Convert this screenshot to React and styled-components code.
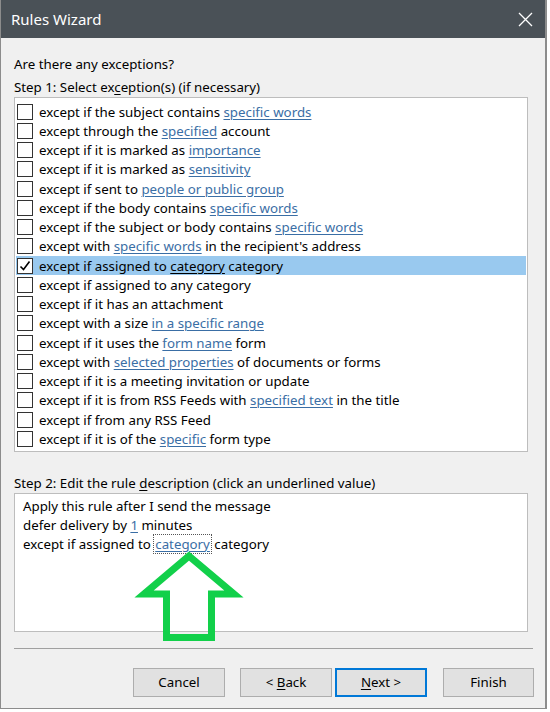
import React from "react";
import styled, {createGlobalStyle, css} from "styled-components";

const GlobalStyle = createGlobalStyle`
    html, body {
        margin: 0;
        padding: 0;
        background: #ffffff;
    }
    body {
        font-family: "Noto Sans", "Open Sans", sans-serif;
        font-size: 13.3px;
        color: #000000;
    }
`;

const Window = styled.div`
    position: relative;
    width: 547px;
    height: 709px;
    box-sizing: border-box;
    background: #f0f0f0;
    border-left: 1px solid #8c8c8c;
    border-right: 2px solid #8c8c8c;
    border-bottom: 1px solid #8c8c8c;
    display: flex;
    flex-direction: column;
`;

const TitleBar = styled.div`
    height: 38px;
    flex: none;
    background: #4a5157;
    color: #ffffff;
    display: flex;
    align-items: center;
    justify-content: space-between;
    padding: 0 12px 0 10px;
    font-size: 15px;
`;

const CloseIcon = styled.svg`
    width: 15px;
    height: 15px;
`;

const Body = styled.div`
    flex: 1;
    display: flex;
    flex-direction: column;
    padding: 16px 18px 0 13px;
`;

const Label = styled.div`
    line-height: 20px;
    height: 20px;
    margin-top: ${props => props.gap || 0}px;
`;

const Mnemonic = styled.span`
    text-decoration: underline;
    text-underline-offset: 2px;
`;

const ListBox = styled.div`
    background: #ffffff;
    border: 1px solid #bdbdbd;
    width: 514px;
    box-sizing: border-box;
    padding: 4px 1px 2px 1px;
`;

const Row = styled.div`
    height: 19.25px;
    display: flex;
    align-items: center;
    gap: 6px;
    padding-left: 1px;
    white-space: nowrap;

    ${props => props.selected && css`
        background: #99c9ef;
    `}
`;

const Check = styled.div`
    width: 14px;
    height: 14px;
    flex: none;
    border: 1px solid #333333;
    background: #ffffff;
    display: flex;
    align-items: center;
    justify-content: center;
`;

const Link = styled.span`
    color: #3a6ea5;
    text-decoration: underline;
    text-underline-offset: 2px;
    text-decoration-thickness: 1px;

    ${props => props.selected && css`
        color: #000000;
    `}
    ${props => props.focused && css`
        outline: 1px dotted #555555;
        outline-offset: 0px;
        padding: 0 1px;
    `}
`;

const DescBox = styled.div`
    position: relative;
    background: #ffffff;
    border: 1px solid #bdbdbd;
    width: 514px;
    height: 139px;
    box-sizing: border-box;
    padding: 3px 8px;
    line-height: 19px;
`;

const Arrow = styled.svg`
    position: absolute;
    left: 0;
    top: 0;
    width: 260px;
    height: 160px;
    overflow: visible;
    pointer-events: none;
`;

const Separator = styled.div`
    margin-top: 16px;
    width: 519px;
    height: 1px;
    flex: none;
    background: #a0a0a0;
`;

const ButtonRow = styled.div`
    display: flex;
    padding-left: 119px;
    margin-top: 19px;
`;

const Button = styled.div`
    width: ${props => props.w || 92}px;
    height: 29px;
    flex: none;
    box-sizing: border-box;
    margin-left: ${props => props.gap || 0}px;
    background: #e1e1e1;
    border: 1px solid #adadad;
    display: flex;
    align-items: center;
    justify-content: center;

    ${props => props.primary && css`
        border: 2px solid #0078d7;
    `}
`;

const rows = [
    ["except if the subject contains ", "specific words", ""],
    ["except through the ", "specified", " account"],
    ["except if it is marked as ", "importance", ""],
    ["except if it is marked as ", "sensitivity", ""],
    ["except if sent to ", "people or public group", ""],
    ["except if the body contains ", "specific words", ""],
    ["except if the subject or body contains ", "specific words", ""],
    ["except with ", "specific words", " in the recipient's address"],
    ["except if assigned to ", "category", " category", true],
    ["except if assigned to any category"],
    ["except if it has an attachment"],
    ["except with a size ", "in a specific range", ""],
    ["except if it uses the ", "form name", " form"],
    ["except with ", "selected properties", " of documents or forms"],
    ["except if it is a meeting invitation or update"],
    ["except if it is from RSS Feeds with ", "specified text", " in the title"],
    ["except if from any RSS Feed"],
    ["except if it is of the ", "specific", " form type"]
];

export default function App() {
    return (
        <>
            <GlobalStyle />
            <Window>
                <TitleBar>
                    <span>Rules Wizard</span>
                    <CloseIcon viewBox="0 0 15 15">
                        <path d="M1 1 L14 14 M14 1 L1 14" stroke="#ffffff" strokeWidth="1.3" fill="none" />
                    </CloseIcon>
                </TitleBar>
                <Body>
                    <Label>Are there any exceptions?</Label>
                    <Label gap={3}>Step 1: Select ex<Mnemonic>c</Mnemonic>eption(s) (if necessary)</Label>
                    <ListBox>
                        {rows.map((r, i) => (
                            <Row key={i} selected={r[3]}>
                                <Check>
                                    {r[3] && (
                                        <svg width="12" height="12" viewBox="0 0 12 12">
                                            <path d="M1.5 6.5 L4.5 9.5 L10.5 1.5" stroke="#000" strokeWidth="1.6" fill="none" />
                                        </svg>
                                    )}
                                </Check>
                                <span>
                                    {r[0]}
                                    {r[1] && <Link selected={r[3]}>{r[1]}</Link>}
                                    {r[2]}
                                </span>
                            </Row>
                        ))}
                    </ListBox>
                    <Label gap={21}>Step 2: Edit the rule <Mnemonic>d</Mnemonic>escription (click an underlined value)</Label>
                    <DescBox>
                        <div>Apply this rule after I send the message</div>
                        <div>defer delivery by <Link>1</Link> minutes</div>
                        <div>except if assigned to <Link focused>category</Link> category</div>
                        <Arrow viewBox="0 0 260 160">
                            <polygon
                                points="174,62 129,100 151.5,100 151.5,143.5 196.5,143.5 196.5,100 219,100"
                                fill="none"
                                stroke="#12d04a"
                                strokeWidth="7"
                                strokeLinejoin="miter"
                            />
                        </Arrow>
                    </DescBox>
                    <Separator />
                    <ButtonRow>
                        <Button>Cancel</Button>
                        <Button gap={15}><span>&lt; <Mnemonic>B</Mnemonic>ack</span></Button>
                        <Button gap={3} primary><span><Mnemonic>N</Mnemonic>ext &gt;</span></Button>
                        <Button gap={16} w={91}>Finish</Button>
                    </ButtonRow>
                </Body>
            </Window>
        </>
    );
}
